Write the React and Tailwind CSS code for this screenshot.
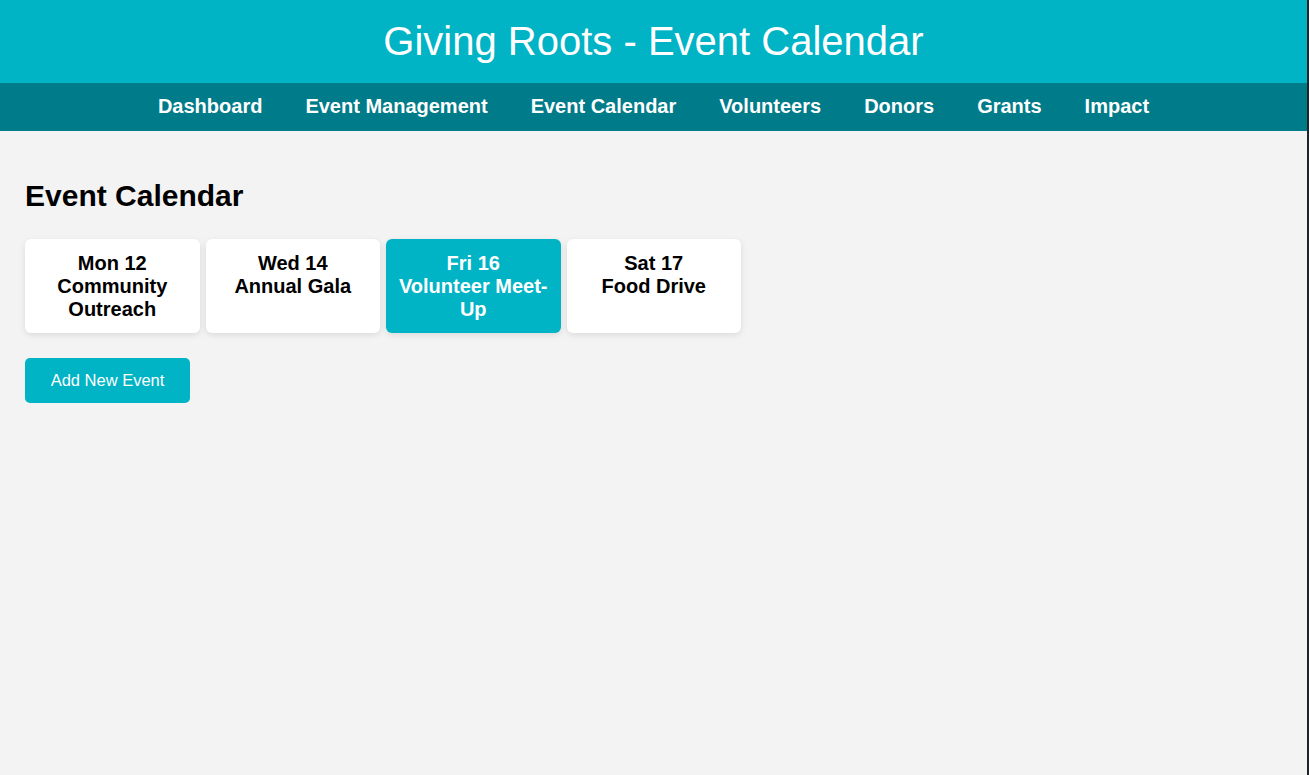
export default function App() {
  const events = [
    { day: "Mon 12", name: "Community Outreach" },
    { day: "Wed 14", name: "Annual Gala" },
    { day: "Fri 16", name: "Volunteer Meet-Up", active: true },
    { day: "Sat 17", name: "Food Drive" },
  ];
  const nav = ["Dashboard", "Event Management", "Event Calendar", "Volunteers", "Donors", "Grants", "Impact"];
  return (
    <div className="flex min-h-screen w-full" style={{ fontFamily: '"Liberation Sans", Arial, sans-serif' }}>
      <div className="flex-1 min-h-screen bg-[#f3f3f3] flex flex-col">
        <header className="h-[83px] bg-[#00b3c5] flex items-center justify-center">
          <h1 className="text-[40px] text-white font-normal leading-none pb-[2px]">Giving Roots - Event Calendar</h1>
        </header>
        <nav className="h-[48px] bg-[#007b89] flex items-center justify-center gap-[43px]">
          {nav.map((n) => (
            <a key={n} className="text-white font-bold text-[20px] leading-none pb-[3px] cursor-pointer">{n}</a>
          ))}
        </nav>
        <main className="px-[25px] pt-[48px]">
          <h2 className="text-[30px] font-bold text-black leading-[34.5px]">Event Calendar</h2>
          <div className="flex gap-[6px] mt-[25.5px]">
            {events.map((e) => (
              <div
                key={e.day}
                className={`w-[174.5px] h-[94px] rounded-[6px] pt-[13px] px-[12px] text-center font-bold text-[20px] leading-[23px] shadow-[0_2px_6px_rgba(0,0,0,0.1)] ${
                  e.active ? "bg-[#00b3c5] text-white" : "bg-white text-black"
                }`}
              >
                <div>{e.day}</div>
                <div>{e.name}</div>
              </div>
            ))}
          </div>
          <button className="mt-[25px] w-[165px] h-[45px] rounded-[5px] bg-[#00b3c5] text-white text-[16.5px]">
            Add New Event
          </button>
        </main>
      </div>
      <div className="w-[2px] bg-[#202327]" />
    </div>
  );
}
